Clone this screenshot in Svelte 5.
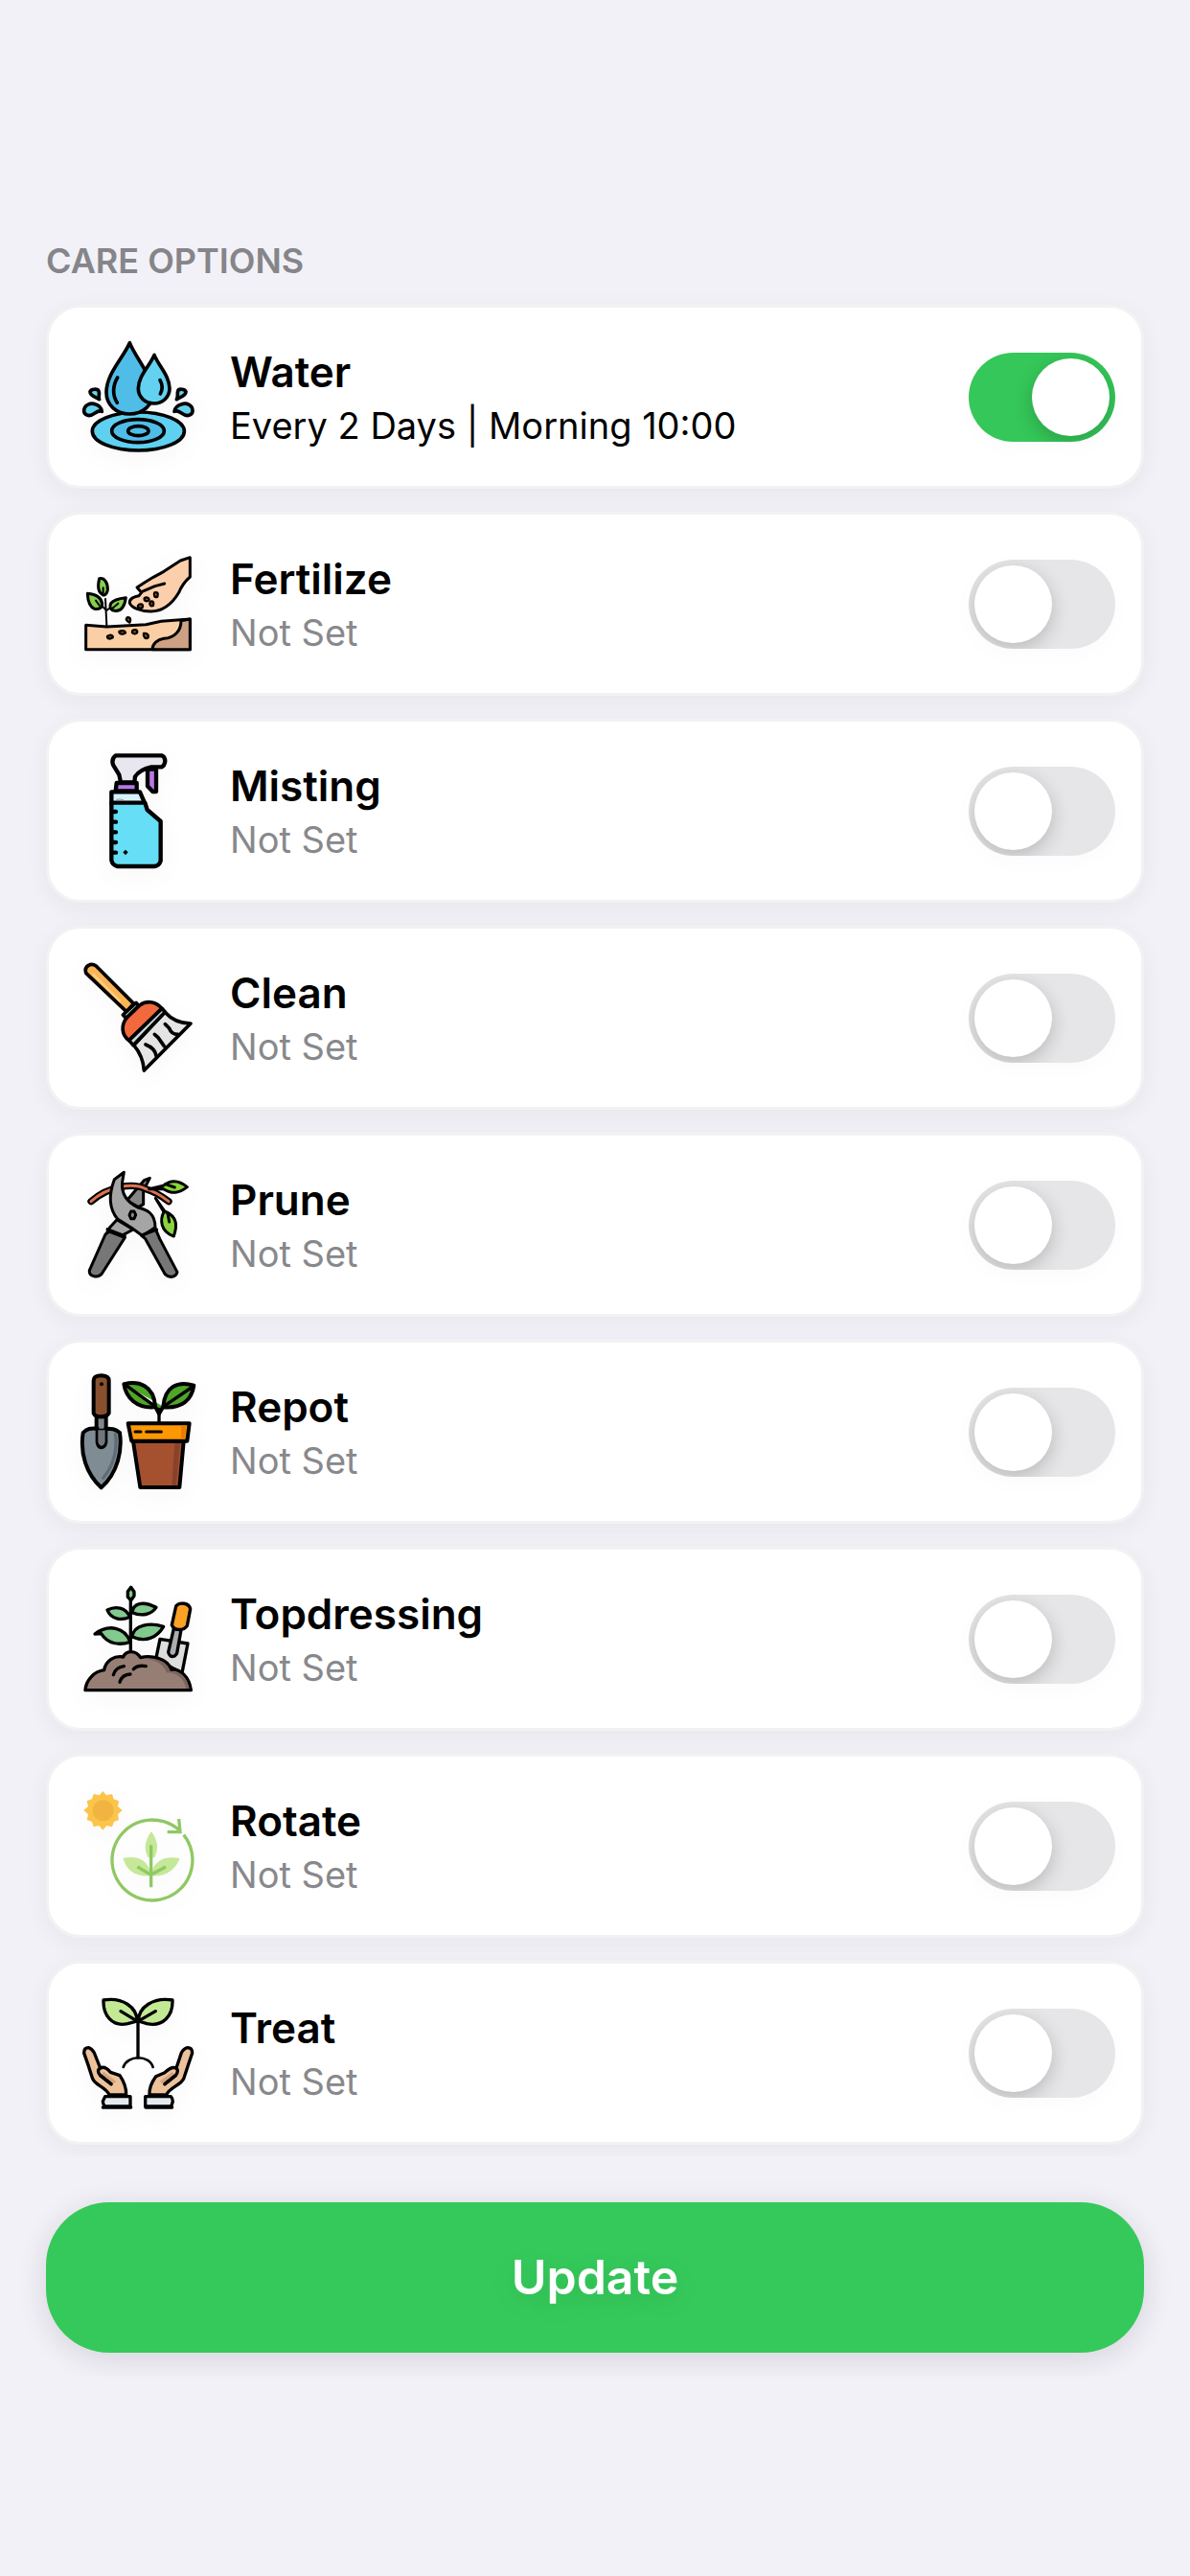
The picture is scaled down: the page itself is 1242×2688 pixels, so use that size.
<script lang="ts">
  interface CareOption {
    id: string;
    name: string;
    schedule: string;
    enabled: boolean;
    viewBox: string;
  }

  let options: CareOption[] = $state([
    { id: 'water', name: 'Water', schedule: 'Every 2 Days | Morning 10:00', enabled: true, viewBox: '0 -3 450 450' },
    { id: 'fertilize', name: 'Fertilize', schedule: '', enabled: false, viewBox: '0 0 450 450' },
    { id: 'misting', name: 'Misting', schedule: '', enabled: false, viewBox: '0 3 450 450' },
    { id: 'clean', name: 'Clean', schedule: '', enabled: false, viewBox: '0 6 450 450' },
    { id: 'prune', name: 'Prune', schedule: '', enabled: false, viewBox: '0 9 450 450' },
    { id: 'repot', name: 'Repot', schedule: '', enabled: false, viewBox: '0 12 450 450' },
    { id: 'topdressing', name: 'Topdressing', schedule: '', enabled: false, viewBox: '0 0 450 450' },
    { id: 'rotate', name: 'Rotate', schedule: '', enabled: false, viewBox: '0 3 450 450' },
    { id: 'treat', name: 'Treat', schedule: '', enabled: false, viewBox: '0 6 450 450' }
  ]);

  function update() {
    console.log('Updating care options:', $state.snapshot(options));
  }
</script>

<main class="care-page">
  <section class="care-section">
    <h2 class="section-title">CARE OPTIONS</h2>
    <ul class="care-list">
      {#each options as option (option.id)}
        <li class="care-card">
          <svg class="care-icon" viewBox={option.viewBox} aria-hidden="true">
            {#if option.id === 'water'}
              <g stroke="#000" stroke-width="11" stroke-linejoin="round" stroke-linecap="round">
                <ellipse cx="223" cy="330" rx="144" ry="60" fill="#5fd0f0" />
                <path d="M196 53C176 100 123 150 123 208C123 250 156 276 195 276C238 276 270 248 268 208C266 154 214 100 196 53Z" fill="#4fbde8" />
                <path d="M273 91C259 126 223 157 223 196C223 224 245 243 272 243C300 243 321 223 321 196C321 157 287 126 273 91Z" fill="#63d2f1" />
                <path d="M158 162C142 188 142 218 157 241" fill="none" />
                <path d="M291 170C299 184 299 200 292 213" fill="none" />
                <ellipse cx="222" cy="329" rx="82" ry="36" fill="#4fbde8" />
                <ellipse cx="223" cy="329" rx="32" ry="15" fill="#4fbde8" />
                <path d="M72 206C75 197 95 196 99 204C103 213 97 221 101 230C91 223 72 220 72 206Z" fill="#63d2f1" />
                <path d="M372 206C369 197 349 196 347 204C344 213 349 221 343 230C353 223 372 220 372 206Z" fill="#63d2f1" />
                <path d="M53 268C52 247 74 240 88 245C101 249 108 259 109 268C94 261 86 280 69 281C60 280 54 276 53 268Z" fill="#63d2f1" />
                <path d="M393 268C394 247 374 240 359 245C345 249 337 259 336 268C352 261 359 280 377 281C386 280 392 276 393 268Z" fill="#63d2f1" />
              </g>
            {:else if option.id === 'fertilize'}
              <g stroke="#000" stroke-width="9" stroke-linejoin="round" stroke-linecap="round">
                <path d="M385 80L355 90L303 124L270 142L243 158L219 174L233 190L225 200C210 202 195 210 196 222C199 237 232 249 262 249C302 249 331 222 350 190C358 170 371 153 385 141Z" fill="#fbcfac" />
                <path d="M233 188L275 170L305 162" fill="none" />
                <path d="M59 292L124 297L247 290L295 280L385 273V368H59Z" fill="#fbcfa5" />
                <path d="M357 278C357 310 336 332 303 334C283 337 267 350 267 368H385V273Z" fill="#cda184" />
                <path d="M124 293L120 210M122 245L98 220M123 247L143 231" fill="none" stroke-width="6" />
                <path d="M101 146C117 143 128 158 127 182C125 194 117 200 112 197C97 190 95 171 101 146Z" fill="#87cf4e" />
                <path d="M64 193C87 195 107 204 110 225C110 239 99 243 86 241C72 235 65 218 64 193Z" fill="#87cf4e" />
                <path d="M184 206C180 234 168 249 149 247C137 246 131 235 137 224C146 211 163 208 184 206Z" fill="#87cf4e" />
                <path d="M113 175V193M90 215L101 230M160 224L142 239" fill="none" stroke-width="6" />
                <g fill="#a95b16" stroke-width="7">
                  <path d="M222 231C226 224 237 225 237 233C235 243 220 240 222 231Z" />
                  <path d="M242 208C248 202 257 206 257 213C251 219 241 218 242 208Z" />
                  <path d="M260 219C267 215 273 219 270 230C261 236 257 226 260 219Z" />
                  <path d="M274 190C283 187 287 193 283 203C274 207 270 199 274 190Z" />
                  <path d="M188 268C197 266 202 273 196 284C187 280 183 274 188 268Z" />
                  <path d="M163 312C171 307 182 309 183 316C175 322 164 322 163 312Z" />
                  <path d="M205 309C213 304 222 307 219 316C211 322 201 318 205 309Z" />
                  <path d="M240 318C249 316 258 323 253 332C244 336 238 327 240 318Z" />
                  <path d="M126 327C134 321 145 322 143 331C135 336 126 336 126 327Z" />
                </g>
              </g>
            {:else if option.id === 'misting'}
              <g stroke="#000" stroke-width="13" stroke-linejoin="round">
                <path d="M252 98V151L268 168H279V98Z" fill="#b978e4" />
                <path d="M152 55H297Q307 60 307 73Q305 88 296 91H264Q227 99 213 121L211 139H168L163 115L145 86Q137 67 152 55Z" fill="#e8e7ef" />
                <path d="M155 141H218V166H152Z" fill="#b978e4" />
                <path d="M139 169H228L244 206L139 207Z" fill="#d6f3fc" />
                <path d="M139 203H244L251 225L293 261V385Q288 401 273 402H158Q142 399 139 383Z" fill="#65def6" />
                <path d="M143 231H153M143 263H153M143 295H153M143 327H153M143 359H153" stroke-linecap="round" />
              </g>
              <path d="M154 194Q164 189 177 194" fill="none" stroke="#87a0a6" stroke-width="3" />
              <path d="M183 350L191 358L183 367L175 358Z" />
            {:else if option.id === 'clean'}
              <g stroke="#000" stroke-width="11" stroke-linejoin="round" stroke-linecap="round">
                <path d="M60 92Q53 76 67 67Q79 61 91 69L209 187L186 212Z" fill="#f9b555" />
                <path d="M216 184L225 194L185 232L175 222Z" fill="#ccd9dd" />
                <path d="M209 317L306 213C322 231 348 249 387 249L241 396C239 364 226 337 209 317Z" fill="#e4e4e5" />
                <path d="M194 302C169 285 168 250 190 228L226 193C248 175 278 179 297 202Z" fill="#f1693c" />
                <path d="M194 302L297 202L307 213L207 317Z" fill="#c7d8de" />
                <path d="M307 251L320 264C326 280 334 283 347 283M274 283L285 293L304 320M246 315Q275 326 279 350" fill="none" />
                <path d="M82 95L165 179" fill="none" stroke="#ffcd81" stroke-width="7" />
              </g>
            {:else if option.id === 'prune'}
              <g stroke="#000" stroke-width="9" stroke-linejoin="round" stroke-linecap="round">
                <path d="M156 218L134 242L126 256L164 272L207 249Z" fill="#a5a5a6" />
                <path d="M259 88L241 95L187 158L223 179L239 170V127Z" fill="#858586" />
                <path d="M132 255L181 274L109 387C98 401 68 398 70 377L120 264Z" fill="#777778" />
                <path d="M75 161C130 112 207 102 247 122C275 130 300 147 318 161" fill="none" stroke-width="22" />
                <path d="M75 161C130 112 207 102 247 122C275 130 300 147 318 161" fill="none" stroke="#dc7450" stroke-width="9" />
                <path d="M178 70L148 92C132 135 129 181 158 216L201 243L237 269L276 242C276 198 250 187 224 181C188 164 169 137 173 100Z" fill="#a5a5a6" />
                <path d="M234 269L276 245L290 278L345 382C341 399 320 402 307 389L245 278Z" fill="#777778" />
                <path d="M126 248L181 269M233 267L281 249" fill="none" />
                <path d="M200 192H210L215 203L210 215H200L195 204Z" fill="#8d8d8e" />
                <path d="M257 122L301 112C319 97 345 90 376 116C350 136 330 139 302 122Z" fill="#8bd43e" />
                <path d="M277 151L303 194C291 217 291 255 334 270C345 238 347 209 306 192Z" fill="#8bd43e" />
                <path d="M308 107L337 117M315 198L320 225" fill="none" />
              </g>
            {:else if option.id === 'repot'}
              <g stroke="#000" stroke-width="12" stroke-linejoin="round" stroke-linecap="round">
                <path d="M92 190H122V233H92Z" fill="#82868c" />
                <path d="M83 76Q84 61 108 61Q132 63 131 77V179Q124 190 107 190Q87 189 83 179Z" fill="#88502f" />
                <path d="M50 240C65 224 79 227 95 227V270Q97 285 107 286Q119 284 121 270V227C136 227 149 226 165 240C173 294 160 365 107 412C60 368 40 305 50 240Z" fill="#808c94" />
                <path d="M97 232H119V268Q117 280 108 281Q99 280 97 268Z" fill="#6f767d" stroke="none" />
                <path d="M151 244C158 285 149 340 113 382" fill="none" stroke="#606d77" stroke-width="10" />
                <path d="M178 88C224 76 272 92 276 158L288 181L301 158C306 98 344 76 397 92C390 139 358 164 304 160M272 160C219 164 184 131 178 88" fill="#4fa629" />
                <path d="M188 94L276 158M389 99L303 157M288 166V206" fill="none" stroke-width="10" />
                <path d="M207 267H365L352 411H229Z" fill="#a5512f" />
                <path d="M191 211H383L376 266H202Z" fill="#fd9802" />
                <path d="M213 237H231M248 237H295" fill="none" stroke-width="9" />
              </g>
              <path d="M357 218H374L368 260H357Z" fill="#e77d05" />
              <path d="M337 273H354L342 404H328Z" fill="#87432a" />
              <circle cx="108" cy="88" r="6" />
            {:else if option.id === 'topdressing'}
              <g stroke="#000" stroke-width="10" stroke-linejoin="round" stroke-linecap="round">
                <path d="M291 226L378 240L360 332L278 289Z" fill="#dcdddd" />
                <path d="M334 193L317 267Q321 285 337 279L344 271L357 197Z" fill="#abadae" />
                <path d="M341 123C351 109 382 112 386 132L376 184C365 201 335 201 328 182Z" fill="#fba124" />
                <path d="M57 386C59 355 84 327 116 323C121 292 149 277 176 282C183 262 214 258 230 284C262 275 315 286 326 322C355 318 383 345 388 386Z" fill="#967e74" />
                <path d="M145 338Q151 315 178 311M165 361Q172 337 198 336M208 320Q221 306 247 311" fill="none" />
                <path d="M199 261V104" fill="none" />
                <path d="M190 77L200 64L210 78V91L200 105L190 94Z" fill="#82c98d" />
                <path d="M126 135C152 122 183 126 197 157C171 169 137 164 126 135Z" fill="#82c98d" />
                <path d="M204 143C207 114 237 105 279 127C263 150 233 156 204 143Z" fill="#82c98d" />
                <path d="M87 210C130 178 181 188 198 235C162 247 127 241 107 209Z" fill="#82c98d" />
                <path d="M204 219C208 179 262 174 302 187C282 220 248 238 204 219Z" fill="#82c98d" />
              </g>
              <path d="M242 291C270 288 302 302 311 331C343 330 366 349 373 381H383C374 344 354 325 324 329C314 292 276 284 242 291Z" fill="#78645e" />
            {:else if option.id === 'rotate'}
              <path d="M112 57L123 70L141 66L146 82L162 88L159 105L173 117L159 130L162 147L147 153L141 169L124 165L112 179L100 165L83 169L78 153L62 147L66 130L52 117L66 105L62 88L78 82L83 66L101 70Z" fill="#fcc44b" />
              <circle cx="113" cy="118" r="33" fill="#f1b441" />
              <path d="M354 182A126 126 0 1 0 365 194" fill="none" stroke="#90c863" stroke-width="10" />
              <path d="M350 144L354 185L314 185" fill="none" stroke="#90c863" stroke-width="10" />
              <path d="M264 183C247 207 237 231 253 265H274C290 231 281 208 264 183Z" fill="#c5e998" />
              <path d="M175 267C212 259 251 265 263 315C276 267 313 260 353 267C339 305 308 326 264 322C216 326 187 308 175 267Z" fill="#c5e998" />
              <path d="M263 226V358M263 319L220 294M263 319L309 294" fill="none" stroke="#90c863" stroke-width="10" />
            {:else}
              <g stroke="#000" stroke-width="10" stroke-linejoin="round" stroke-linecap="round">
                <path d="M220 132C218 88 174 56 114 66C112 114 141 151 190 140Z" fill="#c3e995" />
                <path d="M223 132C224 88 270 56 330 66C332 114 301 151 250 140Z" fill="#c3e995" />
                <path d="M168 101L221 133L277 101M222 133V246" fill="none" />
                <path d="M176 276C188 238 257 236 269 276" fill="none" stroke-width="8" />
                <path d="M53 232Q53 215 67 215Q77 217 85 231L104 279C115 273 125 279 136 292L165 302C176 318 186 339 185 363H132C121 337 86 334 79 310Q66 267 53 232Z" fill="#edc29b" />
                <path d="M392 232Q392 215 377 215Q366 217 358 231L342 279C328 273 317 282 306 293L278 305C267 320 256 337 258 363H311C322 337 357 334 366 310Q380 267 392 232Z" fill="#edc29b" />
                <path d="M104 279Q91 287 104 302L138 329M342 279Q351 288 340 302L306 329" fill="none" />
                <path d="M119 368H198V399H119Q112 393 112 383Z" fill="#e3ebf0" />
                <path d="M245 368H325Q331 374 331 384L326 399H245Z" fill="#e3ebf0" />
                <path d="M112 402H200M246 402H329" fill="none" />
              </g>
              <path d="M115 291C128 303 144 310 154 322L144 328L109 297ZM329 291C316 303 301 310 290 322L300 328L335 297Z" fill="#d4a17e" />
              <path d="M104 302L138 329M340 302L306 329" stroke="#000" stroke-width="10" stroke-linecap="round" />
            {/if}
          </svg>

          <label class="care-text" for={option.id}>
            <span class="care-name">{option.name}</span>
            <span class="care-schedule" class:active={option.enabled}>{option.schedule || 'Not Set'}</span>
          </label>
          <input class="care-toggle" id={option.id} type="checkbox" role="switch" bind:checked={option.enabled} />
        </li>
      {/each}
    </ul>
  </section>

  <footer class="care-footer">
    <button class="update-button" type="button" onclick={update}>Update</button>
  </footer>
</main>

<style>
  :global(body) {
    background: #f2f1f7;
  }

  .care-page {
    min-height: 100vh;
    font-family: Inter, Roboto, sans-serif;
  }

  .care-section {
    padding: 248px 48px 12px;
    overflow: hidden;
  }

  .section-title {
    margin: 0 0 22px;
    font-size: 36px;
    line-height: 48px;
    font-weight: 600;
    color: #85858a;
  }

  .care-list {
    display: flex;
    flex-direction: column;
    gap: 24px;
    margin: 0;
    padding: 0;
    list-style: none;
  }

  .care-card {
    display: flex;
    align-items: center;
    gap: 20px;
    box-sizing: border-box;
    min-height: 192px;
    padding: 0 27px 0 19px;
    background: #fff;
    border: 3px solid #f2f2f3;
    border-radius: 36px;
    box-shadow: 0 6px 24px rgba(40, 30, 70, 0.05);
  }

  .care-icon {
    flex: none;
    width: 150px;
    height: 150px;
    filter: drop-shadow(0 6px 12px rgba(0, 0, 0, 0.03));
  }

  .care-text {
    display: flex;
    flex: 1;
    flex-direction: column;
    padding-top: 3px;
  }

  .care-name {
    font-size: 44px;
    line-height: 56px;
    font-weight: 600;
    color: #000;
  }

  .care-schedule {
    font-size: 38px;
    line-height: 56px;
    color: #88888c;
  }

  .care-schedule.active {
    color: #000;
  }

  .care-toggle {
    appearance: none;
    flex: none;
    display: flex;
    box-sizing: border-box;
    width: 153px;
    height: 93px;
    margin: 0;
    padding: 6px;
    overflow: hidden;
    background: #e6e6e8;
    border-radius: 47px;
    box-shadow: 0 6px 24px rgba(0, 0, 0, 0.02);
  }

  .care-toggle::before {
    content: '';
    width: 81px;
    height: 81px;
    background: #fff;
    border-radius: 50%;
    box-shadow: 0 6px 20px rgba(0, 0, 0, 0.2);
  }

  .care-toggle:checked {
    justify-content: flex-end;
    background: #35c759;
  }

  .care-footer {
    padding: 48px 48px 25px;
    overflow: hidden;
  }

  .update-button {
    display: block;
    width: 100%;
    padding: 46px 24px;
    font-family: inherit;
    font-size: 50px;
    line-height: 65px;
    font-weight: 600;
    color: #fff;
    background: #35c95b;
    border: none;
    border-radius: 66px;
    box-shadow: 0 6px 30px rgba(50, 30, 60, 0.14);
    text-shadow: 0 6px 30px rgba(0, 0, 0, 0.1);
  }
</style>
